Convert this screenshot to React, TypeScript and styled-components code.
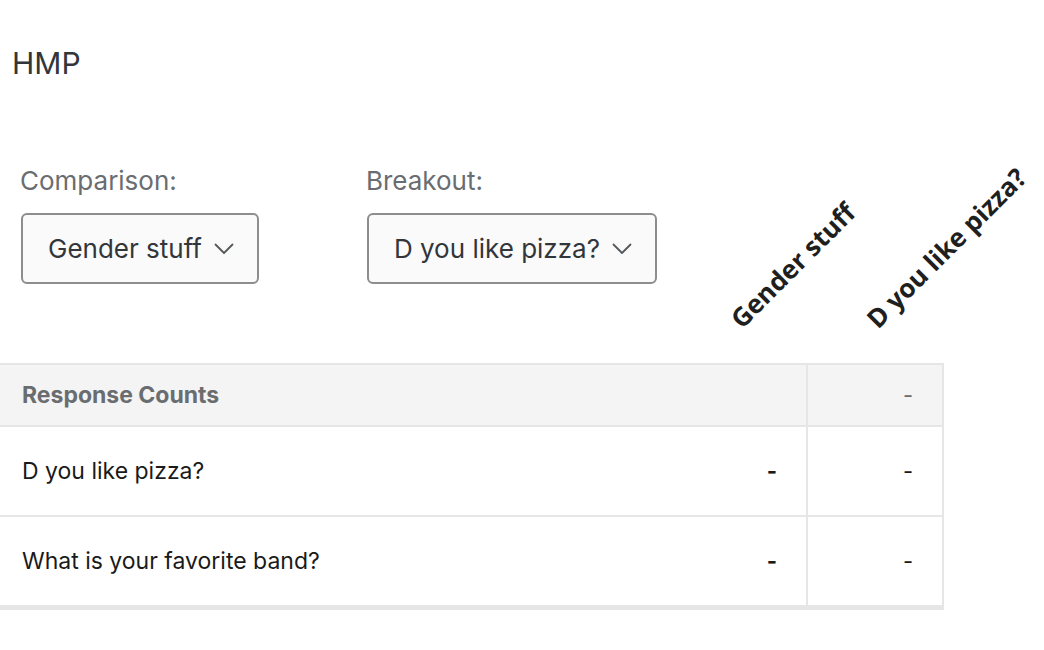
import React from 'react'
import styled, { createGlobalStyle } from 'styled-components'

const GlobalStyle = createGlobalStyle`
  html, body {
    margin: 0;
    padding: 0;
    background: #ffffff;
  }
  body {
    font-family: Inter, Roboto, "Liberation Sans", Arial, sans-serif;
    color: #32363a;
  }
`

type Row = {
  label: string
  values: string[]
}

const columns = ['Gender stuff', 'D you like pizza?']

const rows: Row[] = [
  { label: 'D you like pizza?', values: ['-', '-'] },
  { label: 'What is your favorite band?', values: ['-', '-'] },
]

export default function App(): JSX.Element {
  return (
    <Page>
      <GlobalStyle />
      <Title>HMP</Title>

      <Controls>
        <Field>
          <FieldLabel>Comparison:</FieldLabel>
          <Select>
            <SelectText>Gender stuff</SelectText>
            <Chevron />
          </Select>
        </Field>
        <Field>
          <FieldLabel>Breakout:</FieldLabel>
          <Select>
            <SelectText>D you like pizza?</SelectText>
            <Chevron />
          </Select>
        </Field>
      </Controls>

      <Table>
        <HeadCell $first>
          Response Counts
          <ColumnTitle>{columns[0]}</ColumnTitle>
        </HeadCell>
        <HeadCell $last>
          <Dash $muted>-</Dash>
          <ColumnTitle>{columns[1]}</ColumnTitle>
        </HeadCell>
        {rows.map((row, i) => (
          <React.Fragment key={row.label}>
            <BodyCell $first $bottom={i === rows.length - 1}>
              <span>{row.label}</span>
              <Dash $bold>{row.values[0]}</Dash>
            </BodyCell>
            <BodyCell $last $bottom={i === rows.length - 1}>
              <Dash>{row.values[1]}</Dash>
            </BodyCell>
          </React.Fragment>
        ))}
      </Table>
    </Page>
  )
}

function Chevron() {
  return (
    <ChevronIcon width="20" height="12" viewBox="0 0 20 12" fill="none">
      <polyline
        points="1.5,1.5 10,10 18.5,1.5"
        stroke="#55595d"
        strokeWidth="1.8"
        strokeLinecap="round"
        strokeLinejoin="round"
      />
    </ChevronIcon>
  )
}

const Page = styled.div`
  display: flex;
  flex-direction: column;
  padding-top: 45px;
  width: 1044px;
`

const Title = styled.h1`
  margin: 0 0 0 12px;
  font-size: 30px;
  line-height: 36px;
  font-weight: 400;
  color: #32363a;
`

const Controls = styled.div`
  display: flex;
  gap: 108px;
  margin: 84px 0 0 21px;
`

const Field = styled.div`
  display: flex;
  flex-direction: column;
  gap: 16px;
`

const FieldLabel = styled.label`
  font-size: 26px;
  line-height: 32px;
  color: #6a6d70;
  margin-left: -1px;
`

const Select = styled.div`
  display: flex;
  align-items: center;
  gap: 12px;
  height: 71px;
  box-sizing: border-box;
  padding: 0 23px 0 25px;
  border: 2px solid #8b8d8f;
  border-radius: 6px;
  background: #fafafa;
`

const SelectText = styled.span`
  font-size: 26px;
  color: #32363a;
  white-space: nowrap;
`

const ChevronIcon = styled.svg`
  flex-shrink: 0;
`

const Table = styled.div`
  display: grid;
  grid-template-columns: 806px 136px;
  margin-top: 79px;
  width: 944px;
  border-top: 2px solid #e6e6e6;
  border-right: 2px solid #e6e6e6;
  box-sizing: border-box;
`

const HeadCell = styled.div<{ $first?: boolean; $last?: boolean }>`
  position: relative;
  display: flex;
  align-items: center;
  justify-content: ${(p) => (p.$first ? 'flex-start' : 'flex-end')};
  height: 60px;
  padding: 0 29px 0 ${(p) => (p.$first ? '22px' : '0')};
  background: #f4f4f4;
  border-bottom: 2px solid #e6e6e6;
  border-left: ${(p) => (p.$last ? '2px solid #e6e6e6' : 'none')};
  font-size: 23px;
  font-weight: 700;
  color: #6a6d70;
`

const ColumnTitle = styled.div`
  position: absolute;
  left: calc(100% - 62px);
  bottom: calc(100% + 33px);
  transform-origin: 0 100%;
  transform: rotate(-45deg);
  font-family: 'Open Sans', 'DejaVu Sans', sans-serif;
  font-size: 26px;
  line-height: 1;
  font-weight: 700;
  color: #1f1f1f;
  white-space: nowrap;
`

const BodyCell = styled.div<{ $first?: boolean; $last?: boolean; $bottom?: boolean }>`
  display: flex;
  align-items: center;
  justify-content: ${(p) => (p.$first ? 'space-between' : 'flex-end')};
  height: 88px;
  padding: 0 29px 0 ${(p) => (p.$first ? '22px' : '0')};
  border-bottom: ${(p) => (p.$bottom ? '5px' : '2px')} solid #e6e6e6;
  border-left: ${(p) => (p.$last ? '2px solid #e6e6e6' : 'none')};
  font-size: 23px;
  color: #1a1a1a;
`

const Dash = styled.span<{ $bold?: boolean; $muted?: boolean }>`
  font-size: 22px;
  font-weight: ${(p) => (p.$bold ? 700 : 400)};
  color: ${(p) => (p.$muted ? '#6a6d70' : '#1a1a1a')};
`
